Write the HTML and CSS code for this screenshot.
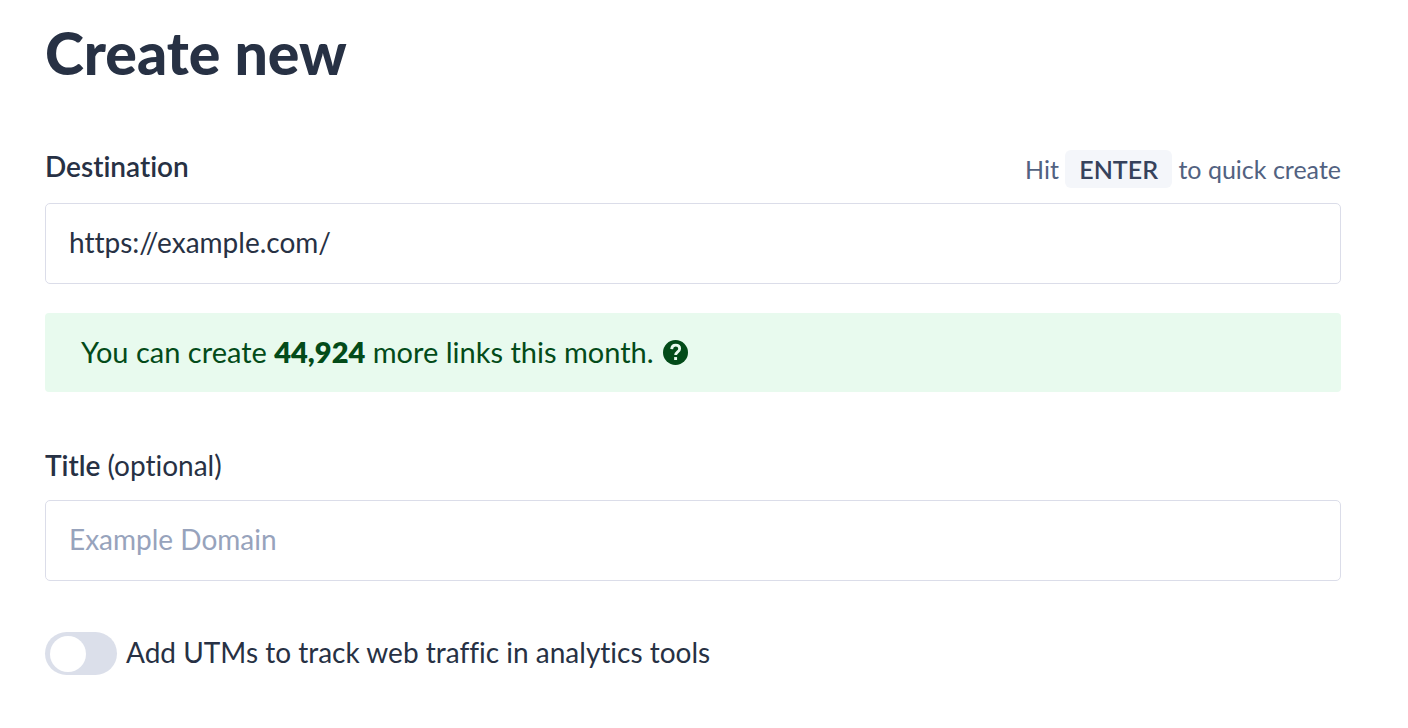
FILE: index.html
```html
<!DOCTYPE html>
<html lang="en">
<head>
    <meta charset="UTF-8">
    <meta name="viewport" content="width=device-width, initial-scale=1.0">
    <title>Create new</title>
    <link rel="stylesheet" href="styles.css">
</head>
<body>

    <form class="create-form">
        <h1>Create new</h1>

        <div class="field">
            <div class="field-header">
                <label class="field-label" for="destination">Destination</label>
                <span class="hint">Hit <kbd>ENTER</kbd> to quick create</span>
            </div>
            <input class="text-input" type="text" id="destination" value="https://example.com/">
        </div>

        <div class="notice">
            <p>You can create <strong>44,924</strong> more links this month.</p>
            <svg class="help-icon" viewBox="0 0 24 24" role="img" aria-label="Help">
                <circle cx="12" cy="12" r="12" fill="currentColor"/>
                <path d="M8.300 8.800C8.500 6.300 9.900 5 12.100 5c2.300 0 3.900 1.300 3.900 3.300 0 3-3.900 3.100-3.900 6.200" fill="none" stroke="#e8faee" stroke-width="2.700"/>
                <rect x="10.700" y="16.400" width="2.800" height="2.800" fill="#e8faee"/>
            </svg>
        </div>

        <div class="field">
            <label class="field-label" for="title">Title <span class="optional">(optional)</span></label>
            <input class="text-input" type="text" id="title" placeholder="Example Domain">
        </div>

        <label class="switch-row">
            <input class="switch" type="checkbox" role="switch">
            <span class="switch-text">Add UTMs to track web traffic in analytics tools</span>
        </label>
    </form>

</body>
</html>
```

FILE: styles.css
```css
* {
    box-sizing: border-box;
}

body {
    margin: 0;
    background-color: #fff;
    color: #273144;
    font-family: "Proxima Nova", Lato, sans-serif;
    font-size: 28px;
    font-variant-ligatures: none;
    line-height: 36px;
}

.create-form {
    padding: 18px 67px 40px 45px;
}

h1 {
    margin: 0 0 62px;
    font-size: 59px;
    font-weight: 900;
    line-height: 70px;
}

.field-header {
    display: flex;
    align-items: flex-start;
    justify-content: space-between;
}

.field-label {
    display: block;
    padding-bottom: 3px;
    font-weight: 600;
    line-height: 33px;
}

.optional {
    font-weight: 400;
}

.hint {
    color: #526281;
    font-size: 25px;
    line-height: 38px;
}

kbd {
    display: inline-block;
    padding: 0 14px;
    border-radius: 6px;
    background-color: #f4f6fa;
    color: #36425c;
    font-family: inherit;
    font-weight: 600;
}

.text-input {
    display: block;
    width: 100%;
    height: 81px;
    margin-top: 15px;
    padding: 0 23px 3px;
    border: 1px solid #dbdde9;
    border-radius: 5px;
    background-color: #fff;
    color: inherit;
    font: inherit;
    font-variant-ligatures: none;
}

.text-input::placeholder {
    color: #97a3bc;
    opacity: 1;
}

.notice {
    display: flex;
    align-items: center;
    gap: 9px;
    margin: 29px 0 57px;
    padding: 21px 36px 22px;
    border-radius: 4px;
    background-color: #e8faee;
    color: #034b19;
    font-size: 29px;
}

.notice p {
    margin: 0;
}

.notice strong {
    font-weight: 800;
}

.help-icon {
    width: 25px;
    height: 25px;
}

.switch-row {
    display: flex;
    align-items: center;
    gap: 9px;
    margin-top: 51px;
}

.switch-text {
    padding-bottom: 3px;
}

.switch {
    flex: none;
    display: flex;
    align-items: center;
    appearance: none;
    width: 72px;
    height: 43px;
    margin: 0;
    padding: 0 5px;
    border-radius: 22px;
    background-color: #dbdfea;
}

.switch::before {
    content: "";
    width: 36px;
    height: 36px;
    border-radius: 50%;
    background-color: #fff;
}

.switch:checked {
    justify-content: flex-end;
    background-color: #034b19;
}
```
